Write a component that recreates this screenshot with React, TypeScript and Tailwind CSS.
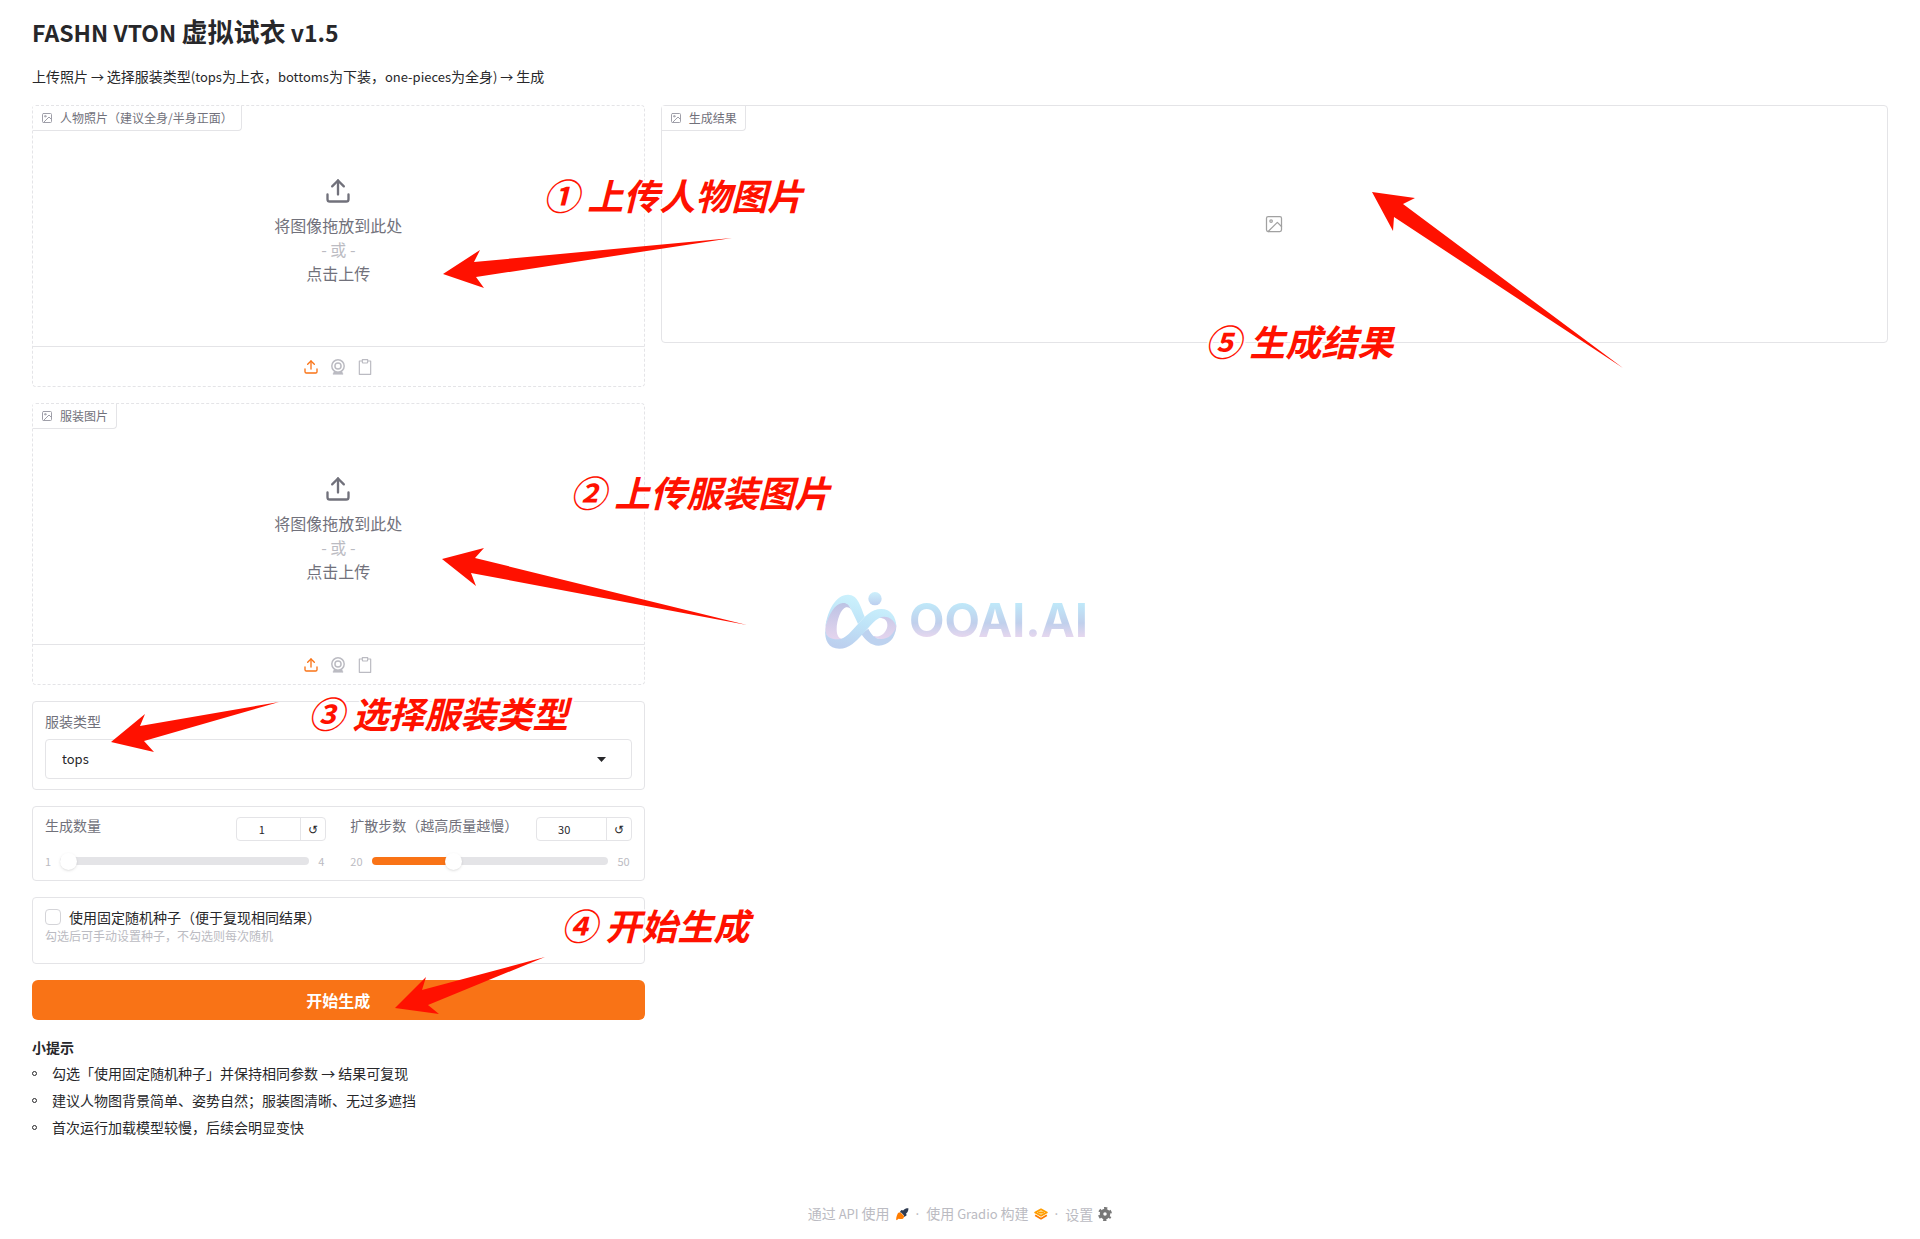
import { useState } from 'react';
import type { ReactNode } from 'react';

function ImageIcon({ size, stroke = 1.5 }: { size: number; stroke?: number }) {
  return (
    <svg width={size} height={size} viewBox="0 0 24 24" fill="none" stroke="currentColor" strokeWidth={stroke} strokeLinecap="round" strokeLinejoin="round">
      <rect x="3" y="3" width="18" height="18" rx="2" />
      <circle cx="8.5" cy="8.5" r="1.5" />
      <polyline points="21 15 16 10 5 21" />
    </svg>
  );
}

function UploadIcon({ size }: { size: number }) {
  return (
    <svg width={size} height={size} viewBox="0 0 24 24" fill="none" stroke="currentColor" strokeWidth="2" strokeLinecap="round" strokeLinejoin="round">
      <path d="M21 15v4a2 2 0 0 1-2 2H5a2 2 0 0 1-2-2v-4" />
      <polyline points="17 8 12 3 7 8" />
      <line x1="12" y1="3" x2="12" y2="15" />
    </svg>
  );
}

function WebcamIcon() {
  return (
    <svg width="16" height="16" viewBox="0 0 24 24" fill="none" stroke="currentColor" strokeWidth="2.2">
      <circle cx="12" cy="10.5" r="9.3" />
      <circle cx="12" cy="10.5" r="4.6" />
      <path d="M6.5 18.5 4.5 22.8h15l-2-4.3c-3 2-8 2-11 0z" fill="currentColor" strokeWidth="1" />
    </svg>
  );
}

function ClipboardIcon() {
  return (
    <svg width="16" height="16" viewBox="0 0 24 24" fill="none" stroke="currentColor" strokeWidth="1.8" strokeLinejoin="round">
      <path d="M8 3H3.5v20h17V3H16" />
      <path d="M8 1h8v3.5a1.500 1.500 0 0 1-1.500 1.500h-5A1.500 1.500 0 0 1 8 4.500z" />
    </svg>
  );
}

function Latin({ children }: { children: ReactNode }) {
  return <span className="text-[13px]">{children}</span>;
}

function BlockLabel({ text }: { text: string }) {
  return (
    <div className="absolute left-0 top-0 flex items-center gap-[7px] h-[25px] px-2 border-r border-b border-zinc-200 rounded-br-[4px] bg-white text-xs text-zinc-500">
      <span className="text-zinc-400"><ImageIcon size={12} stroke={2} /></span>
      <span>{text}</span>
    </div>
  );
}

function UploadBlock({ label }: { label: string }) {
  return (
    <section className="relative border border-dashed border-zinc-200 rounded-[4px]">
      <BlockLabel text={label} />
      <button type="button" className="flex flex-col items-center w-full pt-[71px] pb-[61px] leading-6 text-zinc-500">
        <UploadIcon size={28} />
        <span className="mt-2">将图像拖放到此处</span>
        <span className="text-[#bbbbc2]">- 或 -</span>
        <span>点击上传</span>
      </button>
      <div className="flex items-center justify-center gap-[11px] h-10 border-t border-zinc-200 text-[#bbbbc2]">
        <button type="button" aria-label="上传" className="text-[#f97316]"><UploadIcon size={16} /></button>
        <button type="button" aria-label="摄像头"><WebcamIcon /></button>
        <button type="button" aria-label="剪贴板"><ClipboardIcon /></button>
      </div>
    </section>
  );
}

type SliderProps = {
  id: string;
  label: string;
  min: number;
  max: number;
  initial: number;
  numberClass: string;
};

function Slider({ id, label, min, max, initial, numberClass }: SliderProps) {
  const [value, setValue] = useState(initial);
  const pct = ((value - min) / (max - min)) * 100;

  return (
    <div className="flex-1 min-w-0">
      <div className="flex justify-between">
        <label htmlFor={id} className="text-sm leading-[17px] text-zinc-500">{label}</label>
        <div className="flex h-6 border border-zinc-200 rounded-[4px]">
          <input
            type="text"
            inputMode="numeric"
            aria-label={label}
            value={value}
            onChange={(e) => setValue(Number(e.target.value) || min)}
            className={`${numberClass} pr-[14px] text-center text-[11px] outline-none`}
          />
          <button type="button" aria-label="重置" onClick={() => setValue(initial)} className="w-[25px] border-l border-zinc-200 text-xs">
            ↺
          </button>
        </div>
      </div>
      <div className="flex items-center mt-3 gap-[9px] text-[11px] leading-4 text-[#bbbbc2]">
        <span>{min}</span>
        <input
          id={id}
          type="range"
          min={min}
          max={max}
          value={value}
          onChange={(e) => setValue(Number(e.target.value))}
          style={{ backgroundImage: `linear-gradient(to right, #f97316 ${pct}%, #e4e4e7 ${pct}%)` }}
          className="flex-1 min-w-0 h-2 rounded-full appearance-none [&::-webkit-slider-thumb]:appearance-none [&::-webkit-slider-thumb]:size-[17px] [&::-webkit-slider-thumb]:rounded-full [&::-webkit-slider-thumb]:bg-white [&::-webkit-slider-thumb]:shadow"
        />
        <span className="pr-[2px]">{max}</span>
      </div>
    </div>
  );
}

const arrows = [
  { box: 'left-[443px] top-[238px]', w: 289, h: 50, points: '0,36 37,12 31,24 289,0 33,39 41,50' },
  { box: 'left-[442px] top-[548px]', w: 305, h: 77, points: '0,11 42,0 33,10 305,77 29,25 34,38' },
  { box: 'left-[111px] top-[702px]', w: 168, h: 50, points: '0,40 34,12 29,24 168,0 33,39 43,50' },
  { box: 'left-[395px] top-[957px]', w: 150, h: 57, points: '0,51 31,20 27,33 150,0 33,48 44,57' },
  { box: 'left-[1372px] top-[192px]', w: 251, h: 176, points: '0,0 43,6 31,12 251,176 22,25 21,39' }
];

const notes = [
  { box: 'left-[543px] top-[172px]', text: '① 上传人物图片' },
  { box: 'left-[570px] top-[469px]', text: '② 上传服装图片' },
  { box: 'left-[308px] top-[690px]', text: '③ 选择服装类型' },
  { box: 'left-[561px] top-[902px]', text: '④ 开始生成' },
  { box: 'left-[1205px] top-[318px]', text: '⑤ 生成结果' }
];

function Annotations() {
  return (
    <div className="pointer-events-none">
      {arrows.map((a) => (
        <svg key={a.box} className={`absolute ${a.box}`} width={a.w} height={a.h} viewBox={`0 0 ${a.w} ${a.h}`}>
          <polygon points={a.points} fill="#ff1100" />
        </svg>
      ))}
      {notes.map((n) => (
        <p
          key={n.text}
          className={`absolute ${n.box} whitespace-nowrap text-4xl leading-[44px] font-bold italic text-[#ff1100] [text-shadow:2px_0_#fff,-2px_0_#fff,0_2px_#fff,0_-2px_#fff]`}
        >
          {n.text}
        </p>
      ))}
    </div>
  );
}

function Watermark() {
  return (
    <div className="pointer-events-none absolute left-[824px] top-[590px] flex items-center gap-3">
      <svg width="73" height="60" viewBox="130 88 219 180" fill="none">
        <defs>
          <linearGradient id="wm-front" x1="240" y1="100" x2="200" y2="264" gradientUnits="userSpaceOnUse">
            <stop offset="0" stopColor="#cdf3fd" />
            <stop offset="0.5" stopColor="#bfe4f8" />
            <stop offset="1" stopColor="#bccfee" />
          </linearGradient>
          <linearGradient id="wm-inner" x1="0" y1="125" x2="0" y2="240" gradientUnits="userSpaceOnUse">
            <stop offset="0" stopColor="#bcc3e4" />
            <stop offset="1" stopColor="#e6d5ee" />
          </linearGradient>
          <linearGradient id="wm-dot" x1="0" y1="93" x2="0" y2="135" gradientUnits="userSpaceOnUse">
            <stop offset="0" stopColor="#cdf1fc" />
            <stop offset="1" stopColor="#bccdee" />
          </linearGradient>
        </defs>
        <circle cx="283" cy="114" r="20" fill="url(#wm-dot)" />
        <path d="M134 205C140 160 160 125 186 125C200 125 207 134 212 148C207 140 202 139 196 140C181 143 168 180 168 205C168 224 174 236 190 235C170 245 134 245 134 205Z" fill="url(#wm-inner)" />
        <path d="M296 168C330 160 347 176 347 198C347 220 325 240 296 235C280 231 276 228 280 226C300 233 318 214 320 196C321 180 312 172 296 172Z" fill="url(#wm-inner)" />
        <path d="M134 200C140 150 165 102 202 102C232 102 240 138 252 168L232 190C224 172 218 160 212 148C206 132 198 126 186 127C162 130 145 160 134 200Z" fill="url(#wm-front)" />
        <path d="M263 204C270 218 278 230 294 234C316 239 338 225 346 200C344 235 322 255 294 255C270 255 252 236 242 220Z" fill="#bdd2ef" />
        <path d="M134 202C134 228 148 236 172 236C196 236 214 208 232 190C252 168 272 145 302 145C330 145 347 168 347 200C342 178 322 164 302 170C278 178 262 206 244 222C226 242 206 264 176 264C144 264 130 240 134 202Z" fill="url(#wm-front)" />
      </svg>
      <span className="bg-gradient-to-b from-[#bfeafa] from-20% via-[#c0d0ec] via-55% to-[#f0d8ef] to-85% bg-clip-text font-['Inter',sans-serif] text-[46px] leading-[60px] font-bold text-transparent">
        OOAI.AI
      </span>
    </div>
  );
}

function FooterLink({ text, children }: { text: ReactNode; children: ReactNode }) {
  return (
    <a href="#" className="flex items-center gap-[5px]">
      <span>{text}</span>
      {children}
    </a>
  );
}

function Dot() {
  return <span className="font-['Open_Sans',sans-serif]">·</span>;
}

function Footer() {
  return (
    <footer className="flex items-center justify-center gap-[7px] mt-[60px] text-sm leading-6 text-[#bbbbc2]">
      <FooterLink text={<>通过<Latin> API </Latin>使用</>}>
        <svg width="14" height="14" viewBox="0 0 24 24">
          <path d="M23 2c-4 0-7 1-9 4l-3-1-3 4 3 1 4 4 1 3 4-3-1-3c3-2 4-5 4-9z" fill="#2f3b52" />
          <path d="M10 10c-3-1-5 0-6 3-1 2-2 5-2 9 1 1 1 1 2 0l2-2c5 1 8 1 9-2 1-1 1-2 0-3z" fill="#ff7c00" />
        </svg>
      </FooterLink>
      <Dot />
      <FooterLink text={<>使用<Latin> Gradio </Latin>构建</>}>
        <svg width="14" height="14" viewBox="0 0 24 24" fill="none" strokeLinejoin="round">
          <path d="M2 14l10 6 10-6" stroke="#ff7c00" strokeWidth="3" />
          <path d="M12 4l10 5.5-10 5.5-10-5.500z" stroke="#ff9d00" strokeWidth="3" fill="#ffe9b8" />
          <path d="M7 9.500h10" stroke="#ff9d00" strokeWidth="3" />
        </svg>
      </FooterLink>
      <Dot />
      <FooterLink text="设置">
        <svg width="14" height="14" viewBox="0 0 24 24" fill="none" stroke="#787878">
          <circle cx="12" cy="12" r="6" strokeWidth="6" />
          <circle cx="12" cy="12" r="10" strokeWidth="4" strokeDasharray="5.24 5.23" strokeDashoffset="2.6" transform="rotate(30 12 12)" />
        </svg>
      </FooterLink>
    </footer>
  );
}

export default function App() {
  const tips = [
    '勾选「使用固定随机种子」并保持相同参数 → 结果可复现',
    '建议人物图背景简单、姿势自然；服装图清晰、无过多遮挡',
    '首次运行加载模型较慢，后续会明显变快'
  ];

  return (
    <div lang="zh-CN" className="relative min-h-screen px-8 pt-[14px] pb-4 bg-white text-zinc-800 font-['Noto_Sans_CJK_SC',sans-serif]">
      <h1 className="text-[26px] leading-[34px] font-semibold">
        <span className="text-[23px]">FASHN VTON </span>虚拟试衣<span className="text-[23px]"> v1.5</span>
      </h1>
      <p className="mt-4 text-sm leading-[22px]">
        上传照片<Latin> → </Latin>选择服装类型<Latin>(tops</Latin>为上衣，<Latin>bottoms</Latin>为下装，<Latin>one-pieces</Latin>为全身<Latin>) → </Latin>生成
      </p>

      <main className="flex items-start gap-4 mt-[17px]">
        <div className="flex flex-col flex-1 gap-4 min-w-0">
          <UploadBlock label="人物照片（建议全身/半身正面）" />
          <UploadBlock label="服装图片" />

          {/* Garment type */}
          <section className="px-3 pt-[9px] pb-[10px] border border-zinc-200 rounded-[4px]">
            <label htmlFor="category" className="block text-sm leading-5 text-zinc-500">服装类型</label>
            <div className="relative mt-2">
              <select id="category" className="w-full h-10 px-4 border border-zinc-200 rounded-[4px] bg-white text-[13px] appearance-none">
                <option>tops</option>
                <option>bottoms</option>
                <option>one-pieces</option>
              </select>
              <svg className="absolute right-[26px] top-[18px]" width="9" height="5" viewBox="0 0 9 5">
                <path d="M0 0h9L4.500 5z" fill="#27272a" />
              </svg>
            </div>
          </section>

          {/* Count and steps */}
          <section className="flex gap-6 px-3 pt-[10px] pb-[11px] border border-zinc-200 rounded-[4px]">
            <Slider id="count" label="生成数量" min={1} max={4} initial={1} numberClass="w-[63px]" />
            <Slider id="steps" label="扩散步数（越高质量越慢）" min={20} max={50} initial={30} numberClass="w-[69px]" />
          </section>

          {/* Seed */}
          <section className="px-3 pt-[9px] pb-[19px] border border-zinc-200 rounded-[4px]">
            <label className="flex items-center gap-2 text-sm leading-5">
              <input type="checkbox" className="size-4 border border-zinc-300 rounded-[4px] appearance-none checked:bg-[#f97316]" />
              使用固定随机种子（便于复现相同结果）
            </label>
            <p className="text-xs leading-[17px] text-[#bbbbc2]">勾选后可手动设置种子，不勾选则每次随机</p>
          </section>

          <button type="button" className="h-10 rounded-md bg-[#f97316] text-base font-semibold text-white">开始生成</button>

          <section className="text-sm">
            <h2 className="leading-[22px] font-bold">小提示</h2>
            <ul className="mt-[2px]">
              {tips.map((tip) => (
                <li key={tip} className="flex items-center gap-[15px] leading-[27px] before:size-[5px] before:border before:border-zinc-800 before:rounded-full">
                  {tip}
                </li>
              ))}
            </ul>
          </section>
        </div>

        <section className="relative flex items-center justify-center flex-2 min-w-0 h-[238px] border border-zinc-200 rounded-[4px] text-neutral-400">
          <BlockLabel text="生成结果" />
          <ImageIcon size={20} />
        </section>
      </main>

      <Footer />
      <Watermark />
      <Annotations />
    </div>
  );
}
